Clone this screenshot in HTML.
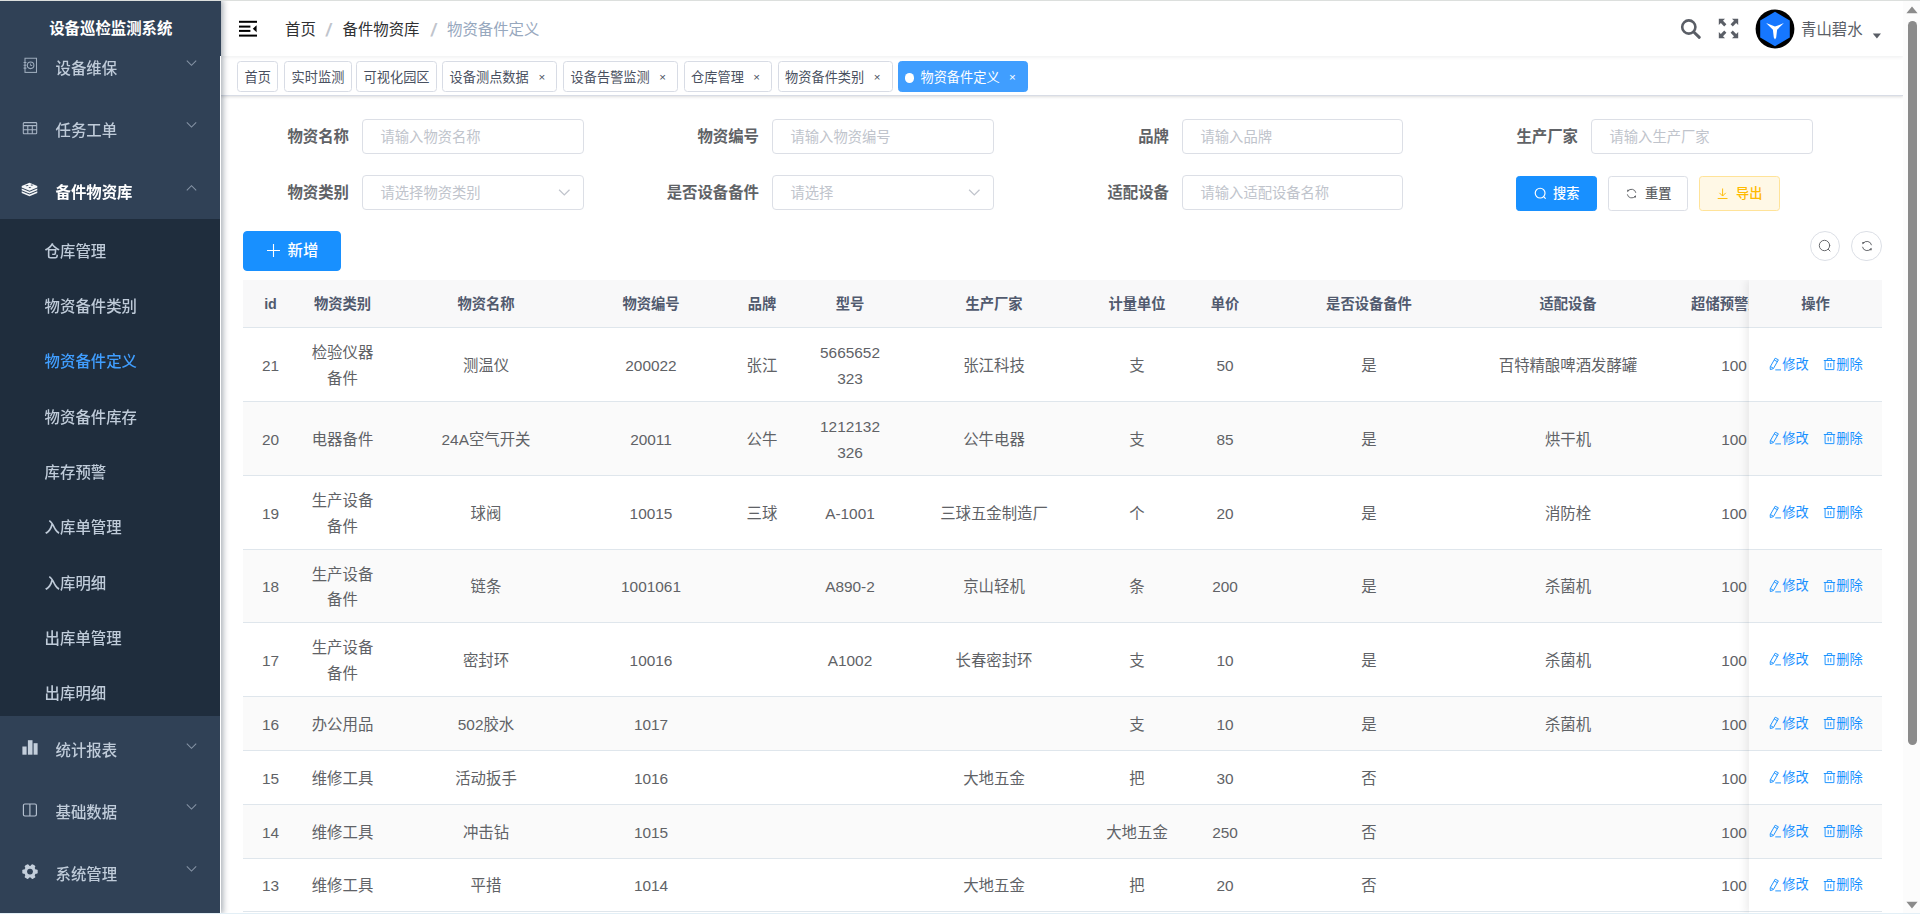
<!DOCTYPE html>
<html lang="zh-CN">
<head>
<meta charset="utf-8">
<title>设备巡检监测系统</title>
<style>
*{box-sizing:border-box;margin:0;padding:0}
html,body{width:1920px;height:914px;overflow:hidden;background:#fff}
body{font-family:"Liberation Sans","Noto Sans CJK SC",sans-serif;font-size:15.4px;color:#606266;position:relative;-webkit-font-smoothing:antialiased}
svg{display:block}
.abs{position:absolute}
/* top line */
#topline{position:absolute;left:0;top:0;width:1920px;height:1px;background:#dcdfdd;z-index:50}
/* sidebar */
#side{position:absolute;left:0;top:0;width:221px;height:914px;background:#304156;overflow:hidden;z-index:10;box-shadow:2px 0 6px rgba(0,21,41,.35)}
#logo{position:absolute;left:0;top:0;width:220px;height:55px;background:#304156;z-index:3;color:#fff;font-weight:bold;font-size:15.4px;line-height:57px;text-align:center;letter-spacing:0}
.mi{position:absolute;left:0;width:220px;height:61.6px;line-height:61.6px;color:#bfcbd9;font-size:15.4px;white-space:nowrap;font-weight:500}
.mi .ic{position:absolute;top:50%}
.mi .tx{position:absolute;left:55.5px;top:3.3px}
.mi .ar{position:absolute;left:185.2px;top:50%;margin-top:-7.8px;width:13px;height:13px}
.mi.act{color:#fff;font-weight:bold}
#sub{position:absolute;left:0;top:219px;width:220px;height:497px;background:#1f2d3d}
.si{position:absolute;left:0;width:220px;height:55.22px;line-height:55.22px;padding-top:3.6px;padding-left:44.6px;color:#bfcbd9;font-size:15.4px;white-space:nowrap;font-weight:500}
.si.on{color:#409eff}
#menu{position:absolute;left:0;top:0;width:220px;height:914px;will-change:transform}
#logo span{display:inline-block;position:relative;left:0.8px}
/* main */
#nav{position:absolute;left:220px;top:1px;width:1683px;height:55px;background:#fff;box-shadow:0 1px 4px rgba(0,21,41,.08);z-index:5}
#tags{position:absolute;left:220px;top:56px;width:1683px;height:39.5px;background:#fff;border-bottom:1px solid #d8dce5;box-shadow:0 1px 3px 0 rgba(0,0,0,.12),0 0 3px 0 rgba(0,0,0,.04);z-index:4}
.tag{position:absolute;top:5px;height:31px;border:1px solid #d8dce5;border-radius:3.5px;background:#fff;color:#495060;font-size:13.2px;line-height:31px;white-space:nowrap;padding-left:6.6px}
.tag .x{position:absolute;right:11.2px;top:0.4px;font-size:11.5px;color:#495060}
.tag.on{background:#409eff;border-color:#409eff;color:#fff}
.tag.on .x{color:#fff}
.tag.on:before{content:"";display:inline-block;width:9.2px;height:9.2px;border-radius:50%;background:#fff;margin-right:6.4px;position:relative;top:0.6px;margin-left:-0.2px}
.bc.sep{color:#c0c4cc;font-weight:bold;font-family:"Noto Sans CJK SC",sans-serif;font-size:13.6px;transform:scaleX(1.5);transform-origin:0 50%;margin-top:-1.8px}
.bc{position:absolute;top:1px;line-height:56px;font-size:15.4px;white-space:nowrap}

/* content */
.lb{position:absolute;height:35px;line-height:35.8px;font-weight:bold;font-size:15.4px;color:#606266;text-align:right;width:140px;white-space:nowrap}
.in{position:absolute;height:35px;width:221.6px;padding-top:1px;border:1px solid #dcdfe6;border-radius:4px;background:#fff;line-height:33px;padding-left:17.5px;font-size:14.3px;color:#c0c4cc;white-space:nowrap}
.in .sa{position:absolute;right:10.6px;top:9.2px;width:14.6px;height:14.6px}
.btn{position:absolute;height:35px;border-radius:3.3px;font-weight:500;border:1px solid #dcdfe6;background:#fff;color:#606266;font-size:13.2px;line-height:33px;white-space:nowrap}
.btn.pr{background:#1890ff;border-color:#1890ff;color:#fff}
.btn.wa{background:#fff8e6;border-color:#ffe399;color:#ffba00}
.btn svg{position:absolute}
.btn .t{position:absolute;top:0}
.cir{position:absolute;width:30.4px;height:30.4px;border-radius:50%;border:1px solid #dcdfe6;background:#fff}
.cir svg{position:absolute;left:7.5px;top:7.5px}
/* table */
#tb{position:absolute;left:243px;top:280px;width:1639px;height:634px;overflow:hidden;background:#fff}
#th{position:absolute;left:0;top:0;width:1900px;height:47.5px;background:#f8f8f9;border-bottom:1px solid #dfe6ec}
.th{position:absolute;top:0;height:47px;line-height:49px;text-align:center;font-weight:bold;font-size:14.3px;color:#515a6e;white-space:nowrap;overflow:hidden}
.tr{position:absolute;left:0;width:1900px;border-bottom:1px solid #dfe6ec;background:#fff}
.tr.st{background:#fafafa}
.td{position:absolute;top:1px;height:100%;display:flex;align-items:center;justify-content:center;text-align:center;font-size:15.4px;line-height:25.3px;color:#606266}
.c0{left:0;width:55px}.c1{left:55px;width:89px}.c2{left:143px;width:200px}.c3{left:343px;width:130px}.c4{left:473px;width:92px}
.c5{left:565px;width:84px}.c6{left:649px;width:204px}.c7{left:853px;width:82px}.c8{left:935px;width:94px}.c9{left:1029px;width:194px}
.c10{left:1223px;width:204px}.c11{left:1427px;width:128px}
#fx{position:absolute;left:1506px;top:0;width:133px;height:634px;background:#fff;box-shadow:-3px 0 8px rgba(0,0,0,.075)}
#fx .fh{position:absolute;left:0;top:0;width:133px;height:47.5px;background:#f8f8f9;border-bottom:1px solid #dfe6ec;line-height:49px;text-align:center;font-weight:bold;font-size:14.3px;color:#515a6e}
.fr{position:absolute;left:0;width:133px;border-bottom:1px solid #dfe6ec;background:#fff;font-size:13.2px;color:#1890ff;white-space:nowrap}
.fr.st{background:#fafafa}
.fr span{position:absolute;top:50%;margin-top:-9.7px;line-height:20px}
.fr svg{position:absolute;top:50%;margin-top:-7.5px}
/* scrollbar */
#sb{position:absolute;left:1903px;top:1px;width:17px;height:913px;background:#fcfcfc;z-index:40}
#sb .thumb{position:absolute;left:5px;top:19.6px;width:9.2px;height:724.4px;border-radius:4.5px;background:#8b8b8b}
</style>
</head>
<body>
<div id="topline"></div>
<div style="position:absolute;left:0;top:913px;width:1920px;height:1px;background:#e3eff6;z-index:60"></div>
<div style="position:absolute;left:219.7px;top:56px;width:1.6px;height:857px;background:#fff;z-index:11"></div>
<!-- SIDEBAR -->
<div id="side">
  <div id="menu">
    <div class="mi" style="top:34.7px"><svg class="ic" style="transform:translateY(-2.7px);left:22px;margin-top:-5.6px;width:16px;height:16px" viewBox="0 0 16 16" fill="none" stroke="#9fadbe" stroke-width="1.05"><rect x="3" y="0.9" width="11.5" height="14.2"/><path d="M1.6 5.2h2.8M1.6 8h2.8M1.6 10.8h2.8"/><circle cx="8.6" cy="8" r="3.3"/><path d="M8.6 6.2v2h1.6" stroke-width="0.9"/></svg><span class="tx">设备维保</span><svg class="ar" style="transform:translateY(-1.6px)" viewBox="0 0 13 13" fill="none" stroke="#8593a5" stroke-width="1.05"><path d="M1.8 4.2 L6.5 8.9 L11.2 4.2"/></svg></div>
    <div class="mi" style="top:96.4px"><svg class="ic" style="transform:translateY(-1.4px);left:22px;margin-top:-4.4px;width:16px;height:14px" viewBox="0 0 16 14" fill="none" stroke="#aab7c7" stroke-width="1.05"><rect x="1.3" y="1" width="13.4" height="11.2" rx="0.8"/><path d="M1.3 4h13.4M1.3 8.1h13.4M5.8 4v8.2M10.3 4v8.2"/></svg><span class="tx">任务工单</span><svg class="ar" style="transform:translateY(-0.8px)" viewBox="0 0 13 13" fill="none" stroke="#8593a5" stroke-width="1.05"><path d="M1.8 4.2 L6.5 8.9 L11.2 4.2"/></svg></div>
    <div class="mi act" style="top:158.8px"><svg class="ic" style="transform:translateY(-1px);left:21.3px;margin-top:-6.2px;width:17px;height:15px" viewBox="0 0 17 15" fill="#f4f6f8" stroke="none"><path d="M8.5 0.8 L16.3 3.9 L16.3 5.5 L8.5 8.7 L0.7 5.5 L0.7 3.9 Z"/><path d="M0.7 6.5 L8.5 9.7 L16.3 6.5 L16.3 8.3 L8.5 11.5 L0.7 8.3 Z"/><path d="M0.7 9.3 L8.5 12.5 L16.3 9.3 L16.3 11.1 L8.5 14.3 L0.7 11.1 Z"/><path d="M4.4 3.8 l2.2 -0.9 l1.2 0.5 l-2.2 0.9 Z M9.4 2.9 l1.4 -0.5 l1.5 0.7 l-1.4 0.6 Z M7.4 5.6 l1.4 -0.6 l1.6 0.7 l-1.5 0.6 Z" fill="#304156"/></svg><span class="tx">备件物资库</span><svg class="ar" style="transform:translateY(-0.2px)" viewBox="0 0 13 13" fill="none" stroke="#8593a5" stroke-width="1.05"><path d="M1.8 8.6 L6.5 3.9 L11.2 8.6"/></svg></div>
    <div id="sub">
      <div class="si" style="top:1.30px">仓库管理</div>
      <div class="si" style="top:56.60px">物资备件类别</div>
      <div class="si on" style="top:111.90px">物资备件定义</div>
      <div class="si" style="top:167.20px">物资备件库存</div>
      <div class="si" style="top:222.50px">库存预警</div>
      <div class="si" style="top:277.80px">入库单管理</div>
      <div class="si" style="top:333.10px">入库明细</div>
      <div class="si" style="top:388.40px">出库单管理</div>
      <div class="si" style="top:443.70px">出库明细</div>
    </div>
    <div class="mi" style="top:716.3px"><svg class="ic" style="transform:translateY(1.2px);left:21.5px;margin-top:-9.2px;width:16px;height:16px" viewBox="0 0 16 16" fill="#c3cedb" stroke="none"><rect x="0.4" y="7.3" width="4.2" height="8.2"/><rect x="5.9" y="1" width="4.6" height="14.5"/><rect x="11.6" y="4" width="4" height="11.5"/></svg><span class="tx">统计报表</span><svg class="ar" style="transform:translateY(0.4px)" viewBox="0 0 13 13" fill="none" stroke="#8593a5" stroke-width="1.05"><path d="M1.8 4.2 L6.5 8.9 L11.2 4.2"/></svg></div>
    <div class="mi" style="top:778.6px"><svg class="ic" style="transform:translateY(-1.3px);left:22px;margin-top:-5.4px;width:16px;height:15px" viewBox="0 0 16 15" fill="none" stroke="#b4c0cf" stroke-width="1.15"><rect x="1.4" y="1.3" width="13" height="12" rx="1.4"/><path d="M7.9 1.3v12"/></svg><span class="tx">基础数据</span><svg class="ar" style="transform:translateY(-1.8px)" viewBox="0 0 13 13" fill="none" stroke="#8593a5" stroke-width="1.05"><path d="M1.8 4.2 L6.5 8.9 L11.2 4.2"/></svg></div>
    <div class="mi" style="top:840.9px"><svg class="ic" style="transform:translateY(-1.4px);left:21.5px;margin-top:-6.6px;width:16px;height:16px" viewBox="-8 -8 16 16"><g fill="#c3cedb" transform="rotate(30)"><circle r="5.9"/><g id="tth"><rect x="-2.2" y="-7.7" width="4.4" height="4" rx="1.2"/></g><use href="#tth" transform="rotate(60)"/><use href="#tth" transform="rotate(120)"/><use href="#tth" transform="rotate(180)"/><use href="#tth" transform="rotate(240)"/><use href="#tth" transform="rotate(300)"/></g><circle r="2.9" fill="#304156"/></svg><span class="tx">系统管理</span><svg class="ar" style="transform:translateY(-1.9px)" viewBox="0 0 13 13" fill="none" stroke="#8593a5" stroke-width="1.05"><path d="M1.8 4.2 L6.5 8.9 L11.2 4.2"/></svg></div>
  </div>
  <div id="logo"><span>设备巡检监测系统</span></div>
</div>
<!-- NAVBAR -->
<div id="nav">
  <svg class="abs" style="left:19px;top:18.5px" width="19" height="18" viewBox="0 0 19 18" fill="#000"><rect x="0" y="0.8" width="18" height="2"/><rect x="0" y="5.6" width="11.4" height="2"/><rect x="0" y="9.9" width="11.4" height="2"/><rect x="0" y="14.6" width="18" height="2"/><path d="M13.8 8.7 L17.6 5.2 L17.6 12.2 Z"/></svg>
  <svg class="abs" style="left:1459px;top:16px" width="24" height="24" viewBox="0 0 24 24" fill="none" stroke="#5a5e66" stroke-width="2.6" stroke-linecap="round"><circle cx="9.8" cy="10" r="6.6"/><path d="M14.8 15 L20.3 20.3" stroke-width="3"/></svg>
  <svg class="abs" style="left:1498px;top:17px" width="21" height="21" viewBox="0 0 21 21" fill="#5a5e66" stroke="#5a5e66"><g id="fa"><path d="M0.8 0.8 h6.2 L0.8 7 Z" stroke="none"/><path d="M3.2 3.2 L7.3 7.3" stroke-width="3.1" fill="none"/></g><use href="#fa" transform="translate(21 0) scale(-1 1)"/><use href="#fa" transform="translate(0 21) scale(1 -1)"/><use href="#fa" transform="translate(21 21) scale(-1 -1)"/></svg>
  <svg class="abs" style="left:1535.2px;top:7.6px" width="40" height="40" viewBox="-20 -20 40 40"><circle r="19.4" fill="#000"/><path d="M0 -17.2 L14.8 -8.6 L14.8 8.6 L0 17.2 L-14.8 8.6 L-14.8 -8.6 Z" fill="#1677ff"/><path d="M0 -2.4 L8.9 -5.9 L2.1 0.7 L1.2 8.4 L0 10.4 L-1.2 8.4 L-2.1 0.7 L-8.9 -5.9 Z" fill="#fff"/></svg>
  <span class="bc" style="left:1581px;color:#5a5e66;top:1px">青山碧水</span>
  <svg class="abs" style="left:1652px;top:31.5px" width="10" height="6" viewBox="0 0 10 6" fill="#5a5e66"><path d="M0.8 0.4 H9 L4.9 5.4 Z"/></svg>

  <span class="bc" style="left:65px;color:#303133">首页</span>
  <span class="bc sep" style="left:104.5px">/</span>
  <span class="bc" style="left:122.5px;color:#303133">备件物资库</span>
  <span class="bc sep" style="left:209.5px">/</span>
  <span class="bc" style="left:227px;color:#97a8be">物资备件定义</span>
</div>
<!-- TAGS -->
<div id="tags">
  <div class="tag" style="left:17px;width:41.4px">首页</div>
  <div class="tag" style="left:64px;width:67.5px">实时监测</div>
  <div class="tag" style="left:136px;width:81.4px">可视化园区</div>
  <div class="tag" style="left:222px;width:115.3px">设备测点数据<span class="x">×</span></div>
  <div class="tag" style="left:343px;width:115.2px">设备告警监测<span class="x">×</span></div>
  <div class="tag" style="left:463.5px;width:88.6px">仓库管理<span class="x">×</span></div>
  <div class="tag" style="left:557.5px;width:115.2px">物资备件类别<span class="x">×</span></div>
  <div class="tag on" style="left:677.5px;width:130.5px">物资备件定义<span class="x">×</span></div>
</div>

<!-- CONTENT -->
<div id="content">
  <div class="lb" style="left:209px;top:119px">物资名称</div><div class="in" style="left:362px;top:119px">请输入物资名称</div>
  <div class="lb" style="left:619px;top:119px">物资编号</div><div class="in" style="left:772px;top:119px">请输入物资编号</div>
  <div class="lb" style="left:1029px;top:119px">品牌</div><div class="in" style="left:1182px;top:119px;width:220.8px">请输入品牌</div>
  <div class="lb" style="left:1438px;top:119px">生产厂家</div><div class="in" style="left:1591px;top:119px">请输入生产厂家</div>
  <div class="lb" style="left:209px;top:175px">物资类别</div><div class="in" style="left:362px;top:175px">请选择物资类别<svg class="sa" viewBox="0 0 14 14"><path d="M2 4.5 L7 9.5 L12 4.5" fill="none" stroke="#c0c4cc" stroke-width="1.2"/></svg></div>
  <div class="lb" style="left:619px;top:175px">是否设备备件</div><div class="in" style="left:772px;top:175px">请选择<svg class="sa" viewBox="0 0 14 14"><path d="M2 4.5 L7 9.5 L12 4.5" fill="none" stroke="#c0c4cc" stroke-width="1.2"/></svg></div>
  <div class="lb" style="left:1029px;top:175px">适配设备</div><div class="in" style="left:1182px;top:175px;width:220.8px">请输入适配设备名称</div>
  <div class="btn pr" style="left:1516px;top:176px;width:81px"><svg style="left:17px;top:10px" width="13.2" height="13.2" viewBox="0 0 14 14" fill="none" stroke="#fff" stroke-width="1.25" stroke-linecap="round"><circle cx="6.5" cy="6.5" r="5.2"/><path d="M10.3 10.3 L12 12"/></svg><span class="t" style="left:36px">搜索</span></div>
  <div class="btn" style="left:1608px;top:176px;width:80px"><svg style="left:16.2px;top:10px" width="13.2" height="13.2" viewBox="0 0 14 14" fill="none" stroke="#606266" stroke-width="1"><path d="M3.1 4.5 A4.6 4.6 0 0 1 11.5 6.2"/><path d="M10.9 9.5 A4.6 4.6 0 0 1 2.5 7.8"/><path d="M2.3 3 h2.7 l-2.7 2.5 z" fill="#606266" stroke="none"/><path d="M11.7 11.2 h-2.7 l2.7 -2.5 z" fill="#606266" stroke="none"/></svg><span class="t" style="left:36px">重置</span></div>
  <div class="btn wa" style="left:1699px;top:176px;width:81px"><svg style="left:16.4px;top:10px" width="13.2" height="13.2" viewBox="0 0 14 14" fill="none" stroke="#ffba00" stroke-width="1"><path d="M7 1.6 V9.4 M3.6 6.2 L7 9.6 L10.4 6.2 M1.8 12.2 H12.2"/></svg><span class="t" style="left:36px">导出</span></div>
  <div class="btn pr" id="add" style="left:243px;top:231px;width:98px;height:40px;line-height:38px;font-size:15.4px;font-weight:500;border-radius:4px"><svg style="left:22.2px;top:10.9px" width="15" height="15" viewBox="0 0 15 15" stroke="#fff" stroke-width="1.1" fill="none"><path d="M7.5 1 V14 M1 7.5 H14"/></svg><span class="t" style="left:43.5px">新增</span></div>
  <div class="cir" style="left:1809.9px;top:231.1px"><svg style="left:6.8px;top:6.8px" width="14" height="14" viewBox="0 0 14 14" fill="none" stroke="#606266" stroke-width="0.95" stroke-linecap="round"><circle cx="6.5" cy="6.5" r="5.2"/><path d="M10.3 10.3 L12 12"/></svg></div>
  <div class="cir" style="left:1851.3px;top:231.1px"><svg style="left:7.3px;top:6.9px" width="14" height="14" viewBox="0 0 14 14" fill="none" stroke="#606266" stroke-width="0.95"><path d="M3.1 4.5 A4.6 4.6 0 0 1 11.5 6.2"/><path d="M10.9 9.5 A4.6 4.6 0 0 1 2.5 7.8"/><path d="M2.3 3 h2.7 l-2.7 2.5 z" fill="#606266" stroke="none"/><path d="M11.7 11.2 h-2.7 l2.7 -2.5 z" fill="#606266" stroke="none"/></svg></div>
  <div id="tb">
    <div id="th">
      <div class="th c0">id</div><div class="th c1">物资类别</div><div class="th c2">物资名称</div><div class="th c3">物资编号</div><div class="th c4">品牌</div><div class="th c5">型号</div><div class="th c6">生产厂家</div><div class="th c7">计量单位</div><div class="th c8">单价</div><div class="th c9">是否设备备件</div><div class="th c10">适配设备</div><div class="th c11">超储预警数量</div>
    </div>
<div class="tr" style="top:48px;height:74px"><div class="td c0"><span>21</span></div><div class="td c1"><span>检验仪器<br>备件</span></div><div class="td c2"><span>测温仪</span></div><div class="td c3"><span>200022</span></div><div class="td c4"><span>张江</span></div><div class="td c5"><span>5665652<br>323</span></div><div class="td c6"><span>张江科技</span></div><div class="td c7"><span>支</span></div><div class="td c8"><span>50</span></div><div class="td c9"><span>是</span></div><div class="td c10"><span>百特精酿啤酒发酵罐</span></div><div class="td c11"><span>100</span></div></div>
<div class="tr st" style="top:122px;height:74px"><div class="td c0"><span>20</span></div><div class="td c1"><span>电器备件</span></div><div class="td c2"><span>24A空气开关</span></div><div class="td c3"><span>20011</span></div><div class="td c4"><span>公牛</span></div><div class="td c5"><span>1212132<br>326</span></div><div class="td c6"><span>公牛电器</span></div><div class="td c7"><span>支</span></div><div class="td c8"><span>85</span></div><div class="td c9"><span>是</span></div><div class="td c10"><span>烘干机</span></div><div class="td c11"><span>100</span></div></div>
<div class="tr" style="top:196px;height:74px"><div class="td c0"><span>19</span></div><div class="td c1"><span>生产设备<br>备件</span></div><div class="td c2"><span>球阀</span></div><div class="td c3"><span>10015</span></div><div class="td c4"><span>三球</span></div><div class="td c5"><span>A-1001</span></div><div class="td c6"><span>三球五金制造厂</span></div><div class="td c7"><span>个</span></div><div class="td c8"><span>20</span></div><div class="td c9"><span>是</span></div><div class="td c10"><span>消防栓</span></div><div class="td c11"><span>100</span></div></div>
<div class="tr st" style="top:270px;height:73px"><div class="td c0"><span>18</span></div><div class="td c1"><span>生产设备<br>备件</span></div><div class="td c2"><span>链条</span></div><div class="td c3"><span>1001061</span></div><div class="td c4"><span></span></div><div class="td c5"><span>A890-2</span></div><div class="td c6"><span>京山轻机</span></div><div class="td c7"><span>条</span></div><div class="td c8"><span>200</span></div><div class="td c9"><span>是</span></div><div class="td c10"><span>杀菌机</span></div><div class="td c11"><span>100</span></div></div>
<div class="tr" style="top:343px;height:74px"><div class="td c0"><span>17</span></div><div class="td c1"><span>生产设备<br>备件</span></div><div class="td c2"><span>密封环</span></div><div class="td c3"><span>10016</span></div><div class="td c4"><span></span></div><div class="td c5"><span>A1002</span></div><div class="td c6"><span>长春密封环</span></div><div class="td c7"><span>支</span></div><div class="td c8"><span>10</span></div><div class="td c9"><span>是</span></div><div class="td c10"><span>杀菌机</span></div><div class="td c11"><span>100</span></div></div>
<div class="tr st" style="top:417px;height:54px"><div class="td c0"><span>16</span></div><div class="td c1"><span>办公用品</span></div><div class="td c2"><span>502胶水</span></div><div class="td c3"><span>1017</span></div><div class="td c4"><span></span></div><div class="td c5"><span></span></div><div class="td c6"><span></span></div><div class="td c7"><span>支</span></div><div class="td c8"><span>10</span></div><div class="td c9"><span>是</span></div><div class="td c10"><span>杀菌机</span></div><div class="td c11"><span>100</span></div></div>
<div class="tr" style="top:471px;height:54px"><div class="td c0"><span>15</span></div><div class="td c1"><span>维修工具</span></div><div class="td c2"><span>活动扳手</span></div><div class="td c3"><span>1016</span></div><div class="td c4"><span></span></div><div class="td c5"><span></span></div><div class="td c6"><span>大地五金</span></div><div class="td c7"><span>把</span></div><div class="td c8"><span>30</span></div><div class="td c9"><span>否</span></div><div class="td c10"><span></span></div><div class="td c11"><span>100</span></div></div>
<div class="tr st" style="top:525px;height:54px"><div class="td c0"><span>14</span></div><div class="td c1"><span>维修工具</span></div><div class="td c2"><span>冲击钻</span></div><div class="td c3"><span>1015</span></div><div class="td c4"><span></span></div><div class="td c5"><span></span></div><div class="td c6"><span></span></div><div class="td c7"><span>大地五金</span></div><div class="td c8"><span>250</span></div><div class="td c9"><span>否</span></div><div class="td c10"><span></span></div><div class="td c11"><span>100</span></div></div>
<div class="tr" style="top:579px;height:53px"><div class="td c0"><span>13</span></div><div class="td c1"><span>维修工具</span></div><div class="td c2"><span>平措</span></div><div class="td c3"><span>1014</span></div><div class="td c4"><span></span></div><div class="td c5"><span></span></div><div class="td c6"><span>大地五金</span></div><div class="td c7"><span>把</span></div><div class="td c8"><span>20</span></div><div class="td c9"><span>否</span></div><div class="td c10"><span></span></div><div class="td c11"><span>100</span></div></div>
    <div id="fx">
      <div class="fh">操作</div>
      <div class="fr" style="top:48px;height:74px"><svg style="left:19.5px" width="13" height="14" viewBox="0 0 13 14" fill="none" stroke="#1890ff" stroke-width="0.95"><path d="M6.2 1.2 L9.4 2.8 L4.4 11.6 L1.3 12.6 L1.2 9.9 Z M5.2 3 L8.4 4.7 M1.6 9.6 L4.2 11.2"/><path d="M6.3 12.9 H12"/></svg><span style="left:33.3px">修改</span><svg style="left:73.5px" width="13" height="14" viewBox="0 0 13 14" fill="none" stroke="#1890ff" stroke-width="0.95"><path d="M0.8 3.5 H12.2 M4.3 3.3 V1.6 H8.7 V3.3 M2.1 3.6 V12.6 H10.9 V3.6 M5.2 6 V10.3 M7.8 6 V10.3"/></svg><span style="left:87.3px">删除</span></div>
      <div class="fr st" style="top:122px;height:74px"><svg style="left:19.5px" width="13" height="14" viewBox="0 0 13 14" fill="none" stroke="#1890ff" stroke-width="0.95"><path d="M6.2 1.2 L9.4 2.8 L4.4 11.6 L1.3 12.6 L1.2 9.9 Z M5.2 3 L8.4 4.7 M1.6 9.6 L4.2 11.2"/><path d="M6.3 12.9 H12"/></svg><span style="left:33.3px">修改</span><svg style="left:73.5px" width="13" height="14" viewBox="0 0 13 14" fill="none" stroke="#1890ff" stroke-width="0.95"><path d="M0.8 3.5 H12.2 M4.3 3.3 V1.6 H8.7 V3.3 M2.1 3.6 V12.6 H10.9 V3.6 M5.2 6 V10.3 M7.8 6 V10.3"/></svg><span style="left:87.3px">删除</span></div>
      <div class="fr" style="top:196px;height:74px"><svg style="left:19.5px" width="13" height="14" viewBox="0 0 13 14" fill="none" stroke="#1890ff" stroke-width="0.95"><path d="M6.2 1.2 L9.4 2.8 L4.4 11.6 L1.3 12.6 L1.2 9.9 Z M5.2 3 L8.4 4.7 M1.6 9.6 L4.2 11.2"/><path d="M6.3 12.9 H12"/></svg><span style="left:33.3px">修改</span><svg style="left:73.5px" width="13" height="14" viewBox="0 0 13 14" fill="none" stroke="#1890ff" stroke-width="0.95"><path d="M0.8 3.5 H12.2 M4.3 3.3 V1.6 H8.7 V3.3 M2.1 3.6 V12.6 H10.9 V3.6 M5.2 6 V10.3 M7.8 6 V10.3"/></svg><span style="left:87.3px">删除</span></div>
      <div class="fr st" style="top:270px;height:73px"><svg style="left:19.5px" width="13" height="14" viewBox="0 0 13 14" fill="none" stroke="#1890ff" stroke-width="0.95"><path d="M6.2 1.2 L9.4 2.8 L4.4 11.6 L1.3 12.6 L1.2 9.9 Z M5.2 3 L8.4 4.7 M1.6 9.6 L4.2 11.2"/><path d="M6.3 12.9 H12"/></svg><span style="left:33.3px">修改</span><svg style="left:73.5px" width="13" height="14" viewBox="0 0 13 14" fill="none" stroke="#1890ff" stroke-width="0.95"><path d="M0.8 3.5 H12.2 M4.3 3.3 V1.6 H8.7 V3.3 M2.1 3.6 V12.6 H10.9 V3.6 M5.2 6 V10.3 M7.8 6 V10.3"/></svg><span style="left:87.3px">删除</span></div>
      <div class="fr" style="top:343px;height:74px"><svg style="left:19.5px" width="13" height="14" viewBox="0 0 13 14" fill="none" stroke="#1890ff" stroke-width="0.95"><path d="M6.2 1.2 L9.4 2.8 L4.4 11.6 L1.3 12.6 L1.2 9.9 Z M5.2 3 L8.4 4.7 M1.6 9.6 L4.2 11.2"/><path d="M6.3 12.9 H12"/></svg><span style="left:33.3px">修改</span><svg style="left:73.5px" width="13" height="14" viewBox="0 0 13 14" fill="none" stroke="#1890ff" stroke-width="0.95"><path d="M0.8 3.5 H12.2 M4.3 3.3 V1.6 H8.7 V3.3 M2.1 3.6 V12.6 H10.9 V3.6 M5.2 6 V10.3 M7.8 6 V10.3"/></svg><span style="left:87.3px">删除</span></div>
      <div class="fr st" style="top:417px;height:54px"><svg style="left:19.5px" width="13" height="14" viewBox="0 0 13 14" fill="none" stroke="#1890ff" stroke-width="0.95"><path d="M6.2 1.2 L9.4 2.8 L4.4 11.6 L1.3 12.6 L1.2 9.9 Z M5.2 3 L8.4 4.7 M1.6 9.6 L4.2 11.2"/><path d="M6.3 12.9 H12"/></svg><span style="left:33.3px">修改</span><svg style="left:73.5px" width="13" height="14" viewBox="0 0 13 14" fill="none" stroke="#1890ff" stroke-width="0.95"><path d="M0.8 3.5 H12.2 M4.3 3.3 V1.6 H8.7 V3.3 M2.1 3.6 V12.6 H10.9 V3.6 M5.2 6 V10.3 M7.8 6 V10.3"/></svg><span style="left:87.3px">删除</span></div>
      <div class="fr" style="top:471px;height:54px"><svg style="left:19.5px" width="13" height="14" viewBox="0 0 13 14" fill="none" stroke="#1890ff" stroke-width="0.95"><path d="M6.2 1.2 L9.4 2.8 L4.4 11.6 L1.3 12.6 L1.2 9.9 Z M5.2 3 L8.4 4.7 M1.6 9.6 L4.2 11.2"/><path d="M6.3 12.9 H12"/></svg><span style="left:33.3px">修改</span><svg style="left:73.5px" width="13" height="14" viewBox="0 0 13 14" fill="none" stroke="#1890ff" stroke-width="0.95"><path d="M0.8 3.5 H12.2 M4.3 3.3 V1.6 H8.7 V3.3 M2.1 3.6 V12.6 H10.9 V3.6 M5.2 6 V10.3 M7.8 6 V10.3"/></svg><span style="left:87.3px">删除</span></div>
      <div class="fr st" style="top:525px;height:54px"><svg style="left:19.5px" width="13" height="14" viewBox="0 0 13 14" fill="none" stroke="#1890ff" stroke-width="0.95"><path d="M6.2 1.2 L9.4 2.8 L4.4 11.6 L1.3 12.6 L1.2 9.9 Z M5.2 3 L8.4 4.7 M1.6 9.6 L4.2 11.2"/><path d="M6.3 12.9 H12"/></svg><span style="left:33.3px">修改</span><svg style="left:73.5px" width="13" height="14" viewBox="0 0 13 14" fill="none" stroke="#1890ff" stroke-width="0.95"><path d="M0.8 3.5 H12.2 M4.3 3.3 V1.6 H8.7 V3.3 M2.1 3.6 V12.6 H10.9 V3.6 M5.2 6 V10.3 M7.8 6 V10.3"/></svg><span style="left:87.3px">删除</span></div>
      <div class="fr" style="top:579px;height:53px"><svg style="left:19.5px" width="13" height="14" viewBox="0 0 13 14" fill="none" stroke="#1890ff" stroke-width="0.95"><path d="M6.2 1.2 L9.4 2.8 L4.4 11.6 L1.3 12.6 L1.2 9.9 Z M5.2 3 L8.4 4.7 M1.6 9.6 L4.2 11.2"/><path d="M6.3 12.9 H12"/></svg><span style="left:33.3px">修改</span><svg style="left:73.5px" width="13" height="14" viewBox="0 0 13 14" fill="none" stroke="#1890ff" stroke-width="0.95"><path d="M0.8 3.5 H12.2 M4.3 3.3 V1.6 H8.7 V3.3 M2.1 3.6 V12.6 H10.9 V3.6 M5.2 6 V10.3 M7.8 6 V10.3"/></svg><span style="left:87.3px">删除</span></div>
    </div>
  </div>
</div>
<div id="sb"><svg class="abs" style="left:2.8px;top:5px" width="12" height="8" viewBox="0 0 12 8" fill="#8b8b8b"><path d="M6 0.6 L11.6 7.2 H0.4 Z"/></svg><div class="thumb"></div><svg class="abs" style="left:2.8px;top:900px" width="12" height="8" viewBox="0 0 12 8" fill="#8b8b8b"><path d="M6 7.4 L11.6 0.8 H0.4 Z"/></svg></div>

</body>
</html>
